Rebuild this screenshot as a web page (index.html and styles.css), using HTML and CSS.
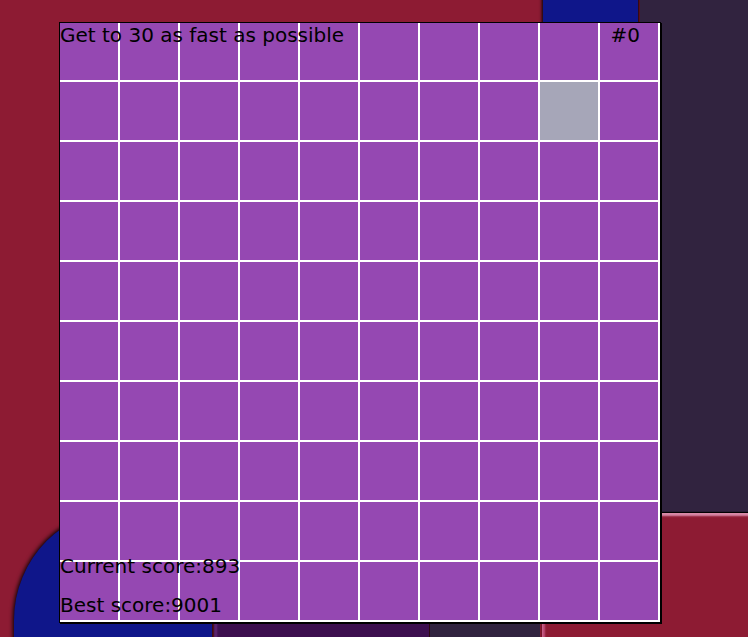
FILE: index.html
```
<!DOCTYPE html>
<html lang="en">
  <head>
    <meta charset="UTF-8" />
    <meta name="viewport" content="width=device-width, initial-scale=1.0" />
    <title>Get to 30</title>
    <link rel="stylesheet" href="styles.css">
  </head>
  <body>
    <div class="bg">
      <span class="tile tile-blue-top"></span>
      <span class="tile tile-dark-right"></span>
      <span class="tile tile-red-corner"></span>
      <span class="tile tile-dark-bottom"></span>
      <span class="tile tile-plum-bottom"></span>
      <span class="tile tile-blue-round"></span>
    </div>
    <main>
      <div class="board">
        <div class="grid"></div>
        <div class="hud">
          <p class="goal">Get to 30 as fast as possible</p>
          <p class="count">#0</p>
        </div>
        <div class="scores">
          <p>Current score:893</p>
          <p>Best score:9001</p>
        </div>
      </div>
    </main>
    <script>
      let grille = document.querySelector('.grid');
      for (let j = 0; j < 100; j++) {
        let cell = document.createElement('span');
        cell.className = 'cell';
        // la case grise : 2e ligne, 9e colonne
        if (j == 18) cell.className += ' off';
        grille.appendChild(cell);
      }
    </script>
  </body>
</html>
```

FILE: styles.css
```
html {
  overflow: hidden;
}
body {
  margin: 0;
  height: 637px;
  overflow: hidden;
  background: #8d1b33;
  font-family: "DejaVu Sans", Verdana, sans-serif;
}
.bg {
  position: absolute;
  left: 0;
  top: 0;
  width: 748px;
  height: 637px;
  overflow: hidden;
}
.tile {
  position: absolute;
  display: block;
}
.tile-blue-top {
  left: 543px;
  top: -10px;
  width: 95px;
  height: 60px;
  background: #0f168a;
  box-shadow: 0 0 3px 1px #000;
}
.tile-dark-right {
  left: 640px;
  top: 0;
  right: 0;
  height: 513px;
  background: #31233f;
}
.tile-red-corner {
  left: 542px;
  top: 513px;
  right: -10px;
  bottom: -10px;
  background: #8d1b33;
  box-shadow: 0 -1px 1px #000, inset 0 3px 2px #d88aa8, inset 3px 0 2px #c0507a;
}
.tile-dark-bottom {
  left: 430px;
  top: 560px;
  width: 110px;
  height: 100px;
  background: #31233f;
  box-shadow: -1px 0 2px #000;
}
.tile-plum-bottom {
  left: 214px;
  top: 560px;
  width: 215px;
  height: 100px;
  background: #3d0f4f;
  box-shadow: inset 3px 0 2px #6a2a80;
}
.tile-blue-round {
  left: 14px;
  top: 508px;
  width: 198px;
  height: 200px;
  background: #0f168a;
  border-top-left-radius: 112px;
  box-shadow: 0 0 4px 1px #000;
}

main {
  position: relative;
  padding: 22px 0 0 59px;
}
.board {
  position: relative;
  width: 600px;
  height: 599px;
  border: 1px solid #000;
  box-shadow: 1px 1px 0 #000;
  background: #fff;
}
.grid {
  display: grid;
  grid-template-columns: repeat(10, 58px);
  grid-template-rows: 57px repeat(9, 58px);
  gap: 2px;
}
.cell {
  background: #9548b2;
}
.cell.off {
  background: #a6a6b8;
}
.hud {
  position: absolute;
  left: 0;
  right: 20px;
  top: 1px;
  display: flex;
  justify-content: space-between;
}
.hud p,
.scores p {
  margin: 0;
  font-size: 20px;
  line-height: 23px;
  color: #000;
}
.scores {
  position: absolute;
  left: 0;
  bottom: 5px;
  display: flex;
  flex-direction: column;
  gap: 16px;
}
```
